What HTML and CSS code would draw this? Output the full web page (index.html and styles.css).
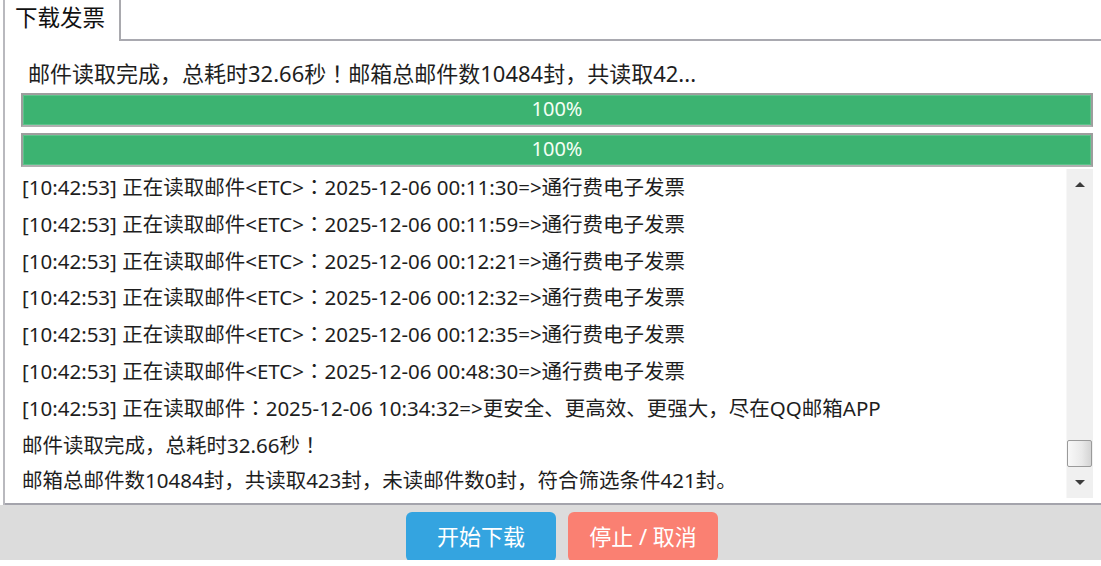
FILE: index.html
```html
<!DOCTYPE html>
<html lang="zh-CN">
<head>
    <meta charset="UTF-8">
    <title>下载发票</title>
    <link rel="stylesheet" href="styles.css">
</head>
<body>

    <div class="frame">
        <!-- Tab header -->
        <div class="tab-row">
            <div class="tab">下载发票</div>
            <div class="tab-fill"></div>
        </div>

        <div class="panel">
            <div class="status">邮件读取完成，总耗时32.66秒<span class="fw">！</span>邮箱总邮件数10484封，共读取42...</div>

            <div class="bar"><span>100%</span></div>
            <div class="bar"><span>100%</span></div>

            <!-- Log output -->
            <div class="log">
                <div class="log-lines">
                    <div class="line">[10:42:53] 正在读取邮件&lt;ETC&gt;<span class="fw">：</span>2025-12-06 00:11:30=&gt;通行费电子发票</div>
                    <div class="line">[10:42:53] 正在读取邮件&lt;ETC&gt;<span class="fw">：</span>2025-12-06 00:11:59=&gt;通行费电子发票</div>
                    <div class="line">[10:42:53] 正在读取邮件&lt;ETC&gt;<span class="fw">：</span>2025-12-06 00:12:21=&gt;通行费电子发票</div>
                    <div class="line">[10:42:53] 正在读取邮件&lt;ETC&gt;<span class="fw">：</span>2025-12-06 00:12:32=&gt;通行费电子发票</div>
                    <div class="line">[10:42:53] 正在读取邮件&lt;ETC&gt;<span class="fw">：</span>2025-12-06 00:12:35=&gt;通行费电子发票</div>
                    <div class="line">[10:42:53] 正在读取邮件&lt;ETC&gt;<span class="fw">：</span>2025-12-06 00:48:30=&gt;通行费电子发票</div>
                    <div class="line">[10:42:53] 正在读取邮件<span class="fw">：</span>2025-12-06 10:34:32=&gt;更安全、更高效、更强大，尽在QQ邮箱APP</div>
                    <div class="line">邮件读取完成，总耗时32.66秒<span class="fw">！</span></div>
                    <div class="line">邮箱总邮件数10484封，共读取423封，未读邮件数0封，符合筛选条件421封。</div>
                </div>
                <div class="scrollbar">
                    <div class="sb-btn"><span class="arrow-up"></span></div>
                    <div class="sb-track"><div class="sb-thumb"></div></div>
                    <div class="sb-btn sb-down"><span class="arrow-down"></span></div>
                </div>
            </div>
        </div>
    </div>

    <!-- Action buttons -->
    <div class="footer">
        <button class="btn btn-start">开始下载</button>
        <button class="btn btn-stop">停止 / 取消</button>
    </div>

</body>
</html>
```

FILE: styles.css
```css
body {
    margin: 0;
    width: 1101px;
    height: 566px;
    overflow: hidden;
    background: #ffffff;
    font-family: "Noto Sans", "Noto Sans CJK SC", sans-serif;
    color: #1e1e1e;
}
.fw {
    font-family: "Noto Sans CJK TC", sans-serif;
    font-feature-settings: "locl" 0;
}
.frame {
    margin-left: 3px;
    border-left: 2px solid #b9b9be;
}

/* Tab header */
.tab-row {
    display: flex;
    height: 41px;
}
.tab {
    width: 104px;
    padding-left: 10px;
    border-right: 2px solid #a9a9ae;
    font-size: 22.5px;
    line-height: 36px;
    color: #111;
}
.tab-fill {
    flex: 1;
    border-bottom: 2px solid #a9a9b0;
}

/* Panel */
.panel {
    padding: 0 8px 0 16px;
    border-bottom: 2px solid #a4a4ac;
    height: 462px;
}
.status {
    display: flex;
    align-items: center;
    padding: 17px 0 0 7px;
    height: 28px;
    font-size: 22px;
    margin-bottom: 7px;
    white-space: nowrap;
}
.bar {
    box-sizing: border-box;
    height: 34px;
    margin-bottom: 6px;
    border: 2px solid #9d9d9d;
    border-bottom-color: #b0b0b0;
    background: #3cb371;
    box-shadow: inset 0 0 0 1px #5cc38a;
    color: #f4fff4;
    text-align: center;
    font-size: 20px;
    line-height: 28px;
}

/* Log */
.log {
    display: flex;
    height: 329px;
    margin-top: -4px;
}
.log-lines {
    flex: 1;
    padding-left: 1px;
    margin-top: -1px;
    font-size: 20.5px;
    white-space: nowrap;
    overflow: hidden;
}
.line {
    height: 36.8px;
    line-height: 36.8px;
}
.scrollbar {
    width: 26px;
    display: flex;
    flex-direction: column;
    background: #f0f0f0;
    border-left: 1px solid #f7f7f7;
}
.sb-btn {
    height: 31px;
    display: flex;
    align-items: center;
    justify-content: center;
}
.sb-track {
    flex: 1;
    display: flex;
    flex-direction: column;
    justify-content: flex-end;
}
.sb-thumb {
    box-sizing: border-box;
    height: 27px;
    margin: 0 1px 0 0;
    border: 1px solid #9a9a9a;
    border-radius: 2px;
    background: linear-gradient(to right, #f8f8f8, #e9e9e9 60%, #d4d4d4);
}
.arrow-up, .arrow-down {
    width: 0;
    height: 0;
    border-left: 5px solid transparent;
    border-right: 5px solid transparent;
}
.arrow-up {
    border-bottom: 5px solid #3c3c3c;
}
.arrow-down {
    border-top: 5px solid #3c3c3c;
}

/* Footer */
.footer {
    height: 48px;
    padding: 7px 0 0 406px;
    background: #dcdcdc;
    overflow: hidden;
    display: flex;
    gap: 12px;
}
.btn {
    width: 150px;
    height: 50px;
    flex-shrink: 0;
    border: none;
    border-radius: 6px;
    color: #ffffff;
    font-family: "Noto Sans", "Noto Sans CJK SC", sans-serif;
    font-size: 22px;
    padding: 0 0 4px;
}
.btn-start {
    background: #34a4e0;
}
.btn-stop {
    background: #fa8072;
}
```
